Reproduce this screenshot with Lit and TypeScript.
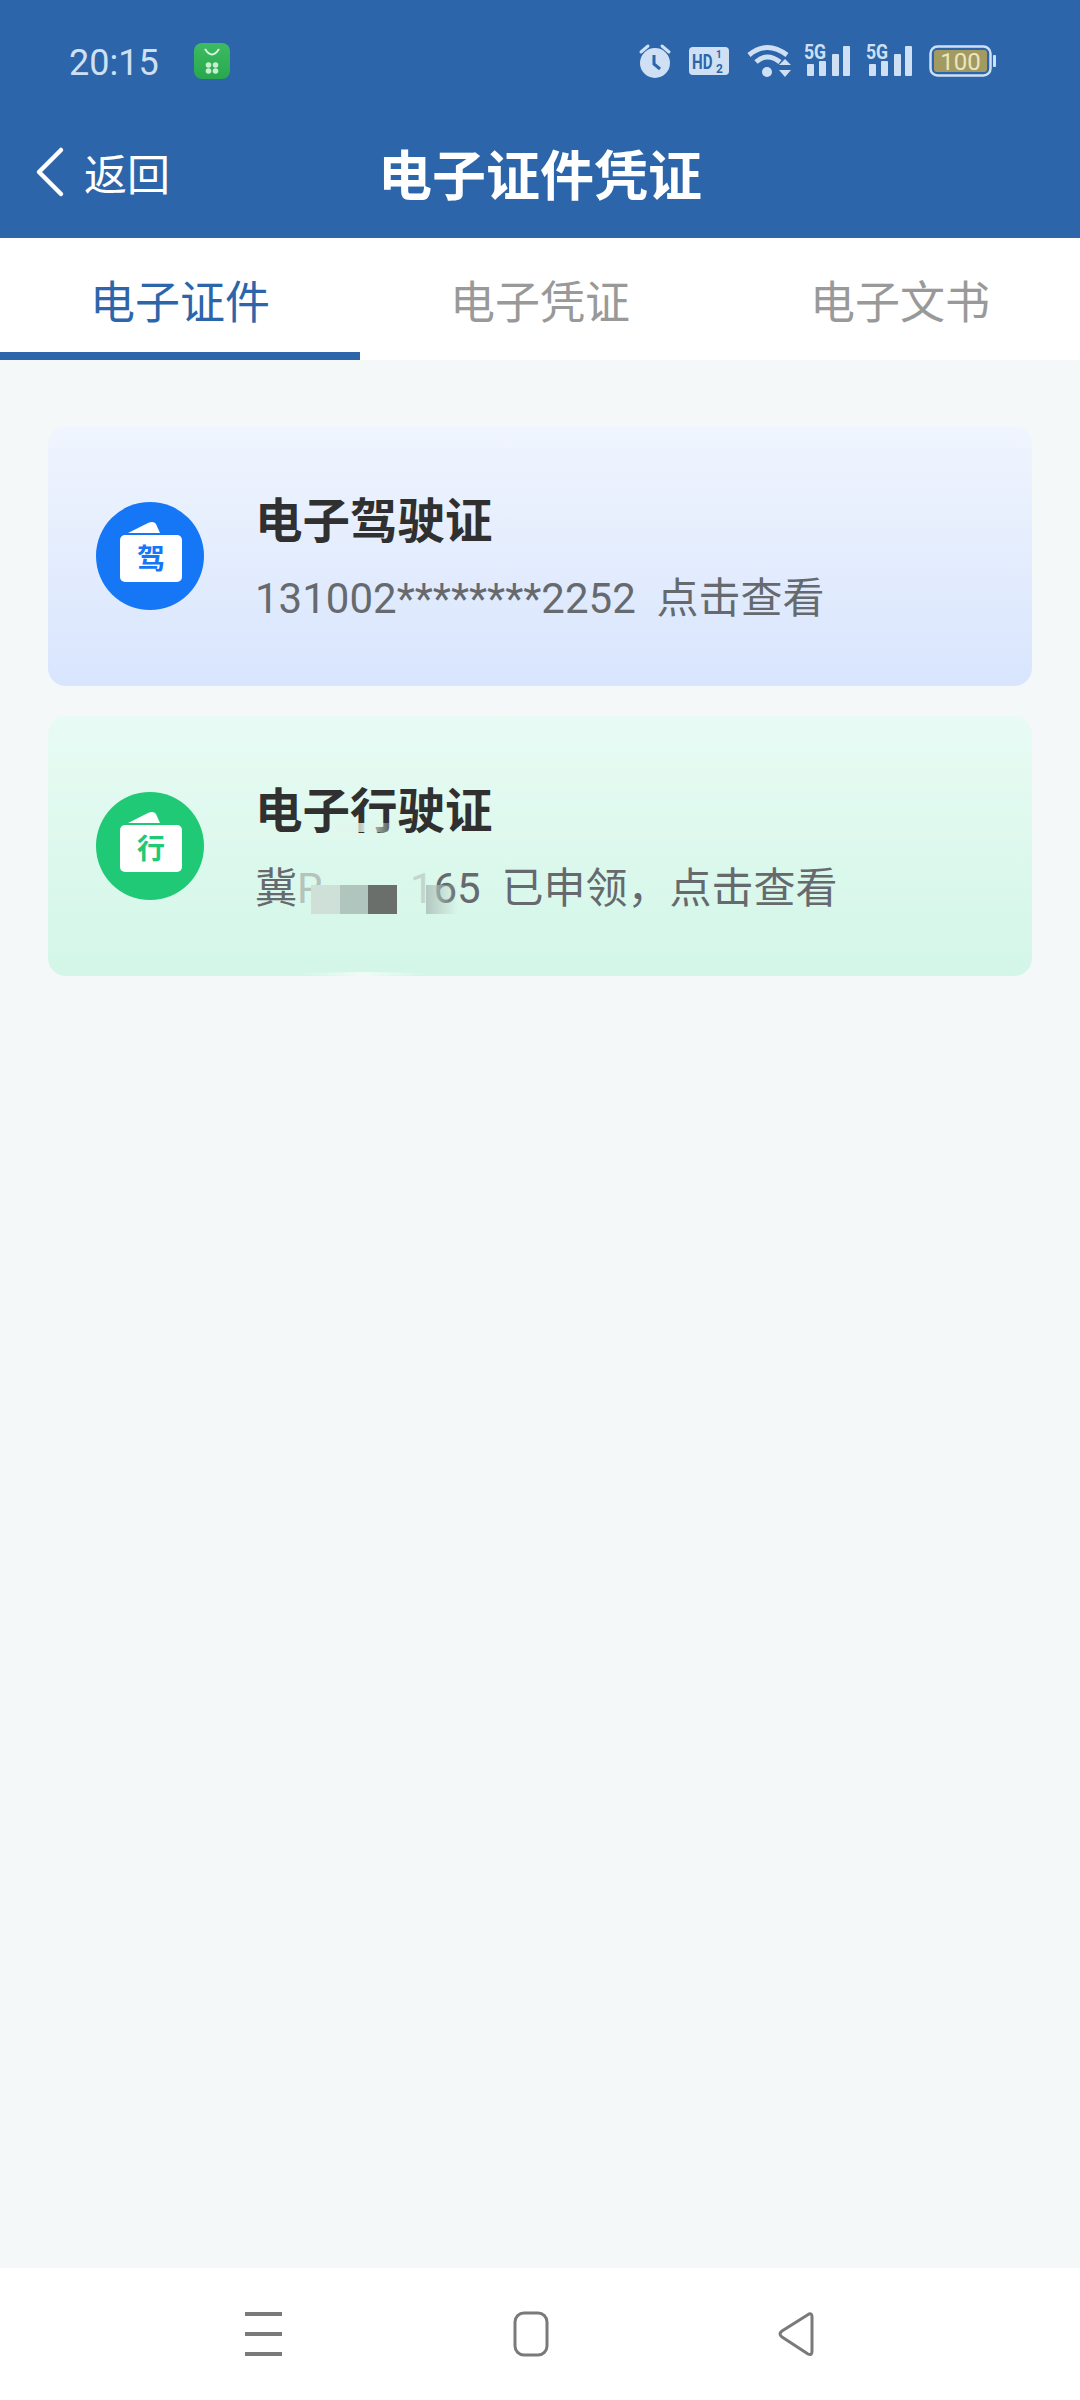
import { LitElement, html, css, svg } from 'lit';
import { customElement, state } from 'lit/decorators.js';

const statusColor = '#cfe0f5';

// card glyph inside the round badge
const badge = (color: string, label: string) => html`
  <svg class="badge" viewBox="0 0 108 108" width="108" height="108">
    <circle cx="54" cy="54" r="54" fill="${color}"></circle>
    <path d="M32 31 L53 20.500 Q58 19 60 22 L64 31 Z" fill="#fff"></path>
    <rect x="24" y="33" width="62" height="47" rx="5" fill="#fff"></rect>
    <text x="55" y="67" text-anchor="middle" font-size="28" font-weight="700" fill="${color}"
      font-family="'Noto Sans CJK SC', sans-serif">${label}</text>
  </svg>
`;

const signal = svg`
  <text transform="translate(0 15) scale(0.84 1)" font-size="21" font-weight="700" fill="${statusColor}" font-family="Roboto, sans-serif">5G</text>
  <rect x="3" y="20" width="7" height="12" rx="1" fill="${statusColor}"></rect>
  <rect x="15" y="17" width="7" height="15" rx="1" fill="${statusColor}"></rect>
  <rect x="28" y="10" width="7" height="22" rx="1" fill="${statusColor}"></rect>
  <rect x="39" y="2" width="7" height="30" rx="1" fill="${statusColor}"></rect>
`;

@customElement('app-root')
export class AppRoot extends LitElement {
  @state() private activeTab = 0;

  static styles = css`
    :host {
      display: flex;
      flex-direction: column;
      width: 1080px;
      height: 2400px;
      background: #f4f8f9;
      font-family: Roboto, 'Noto Sans CJK SC', sans-serif;
    }

    .header {
      background: #2c65a9;
      height: 238px;
      flex: none;
    }

    .status {
      display: flex;
      align-items: center;
      height: 122px;
      padding: 0 83px 0 69px;
      color: #cfe0f5;
    }

    .time {
      font-size: 36px;
      width: 125px;
      margin-top: 3px;
    }

    .status-right {
      margin-left: auto;
      display: flex;
      align-items: center;
      gap: 15px;
    }

    .status-right svg {
      overflow: visible;
    }

    .hd {
      margin-left: 2px;
    }

    .wifi {
      margin-left: 1px;
    }

    .sig-first {
      margin-left: -4px;
    }

    .sig-second {
      margin-left: -1px;
    }

    .nav {
      display: grid;
      grid-template-columns: 1fr auto 1fr;
      align-items: center;
      height: 100px;
      color: #fff;
    }

    .back {
      display: flex;
      align-items: center;
      gap: 18px;
      padding-left: 34px;
      font-size: 43px;
    }

    .title {
      font-size: 54px;
      font-weight: 700;
    }

    .tabs {
      display: grid;
      grid-template-columns: repeat(3, 1fr);
      height: 122px;
      background: #fff;
      flex: none;
    }

    .tab {
      display: flex;
      align-items: center;
      justify-content: center;
      font-size: 45px;
      color: #999;
      padding-top: 8px;
      border-bottom: 8px solid transparent;
      box-sizing: border-box;
    }

    .tab.active {
      color: #2c65a9;
      border-bottom-color: #2c65a9;
    }

    .list {
      flex: 1;
      display: flex;
      flex-direction: column;
      gap: 30px;
      padding: 66px 48px 0;
    }

    .card {
      position: relative;
      display: flex;
      align-items: center;
      gap: 51px;
      height: 260px;
      padding-left: 48px;
      border-radius: 18px;
    }

    .card.blue {
      background: linear-gradient(#f0f5fe, #d8e5fd);
    }

    .card.green {
      background: linear-gradient(#e8fbf4, #d3f6e8);
    }

    .badge {
      flex: none;
      display: block;
    }

    .card-text {
      display: flex;
      flex-direction: column;
      gap: 17px;
      margin-top: 5px;
    }

    .card-title {
      font-size: 47.500px;
      font-weight: 700;
      color: #303030;
      line-height: 64px;
    }

    .card-sub {
      font-size: 42px;
      color: #666a6e;
      line-height: 56px;
      white-space: pre;
    }

    .faded-r {
      color: #b4c4bd;
    }

    .faded-1 {
      color: #c3d6ce;
    }

    .plate {
      display: inline-block;
      width: 87px;
    }

    .mosaic {
      position: absolute;
      top: 169px;
      height: 29px;
    }

    .m1 { left: 263px; width: 29px; background: #cfe0d8; }
    .m2 { left: 292px; width: 28px; background: #b0c5bd; }
    .m3 { left: 320px; width: 29px; background: #6a6f6c; }
    .m4 { left: 378px; width: 32px; background: linear-gradient(90deg, #b3c8c0, rgba(214, 246, 232, 0)); }

    .smear {
      position: absolute;
      left: 282px;
      top: 107px;
      width: 70px;
      height: 9px;
      background: linear-gradient(90deg, rgba(230, 248, 240, 0), rgba(225, 245, 236, 0.9), rgba(230, 248, 240, 0));
    }

    .glow {
      position: absolute;
      left: 250px;
      bottom: 0;
      width: 130px;
      height: 4px;
      border-radius: 50%;
      background: linear-gradient(90deg, rgba(240, 252, 247, 0), #f0fcf7, rgba(240, 252, 247, 0));
    }

    .sysbar {
      flex: none;
      height: 132px;
      background: #fff;
      display: flex;
      align-items: center;
      padding: 0 0 0 245px;
    }

    .sysbar svg {
      display: block;
    }

    .sys-home {
      margin-left: 230px;
    }

    .sys-back {
      margin-left: 229px;
    }
  `;

  private renderStatusIcons() {
    return html`
      <div class="status-right">
        <svg width="34" height="34" viewBox="0 0 34 34">
          <path d="M3 8 L10 2 M31 8 L24 2" stroke="${statusColor}" stroke-width="3" stroke-linecap="round"></path>
          <circle cx="17" cy="19" r="15" fill="${statusColor}"></circle>
          <path d="M16 11 V20 L22 25" stroke="#2c65a9" stroke-width="3" fill="none"></path>
        </svg>
        <svg class="hd" width="42" height="30" viewBox="0 0 42 30">
          <rect width="40" height="28" y="1" rx="4" fill="${statusColor}"></rect>
          <text transform="translate(3 23) scale(0.72 1)" font-size="21" font-weight="700" fill="#2c65a9" font-family="Roboto, sans-serif">HD</text>
          <text x="27" y="12" font-size="10" font-weight="700" fill="#2c65a9" font-family="Roboto, sans-serif">1</text>
          <text x="27" y="27" font-size="12" font-weight="700" fill="#2c65a9" font-family="Roboto, sans-serif">2</text>
        </svg>
        <svg class="wifi" width="46" height="34" viewBox="0 0 46 34">
          <path d="M2 11 Q20 -4 40 11" stroke="${statusColor}" stroke-width="5" fill="none"></path>
          <path d="M9 18 Q20 8 33 18" stroke="${statusColor}" stroke-width="5" fill="none"></path>
          <circle cx="20" cy="28" r="5" fill="${statusColor}"></circle>
          <path d="M32 21 L38 15 L44 21 Z M32 26 H44 L38 33 Z" fill="${statusColor}"></path>
        </svg>
        <svg class="sig-first" width="48" height="34" viewBox="0 0 48 34">${signal}</svg>
        <svg class="sig-second" width="48" height="34" viewBox="0 0 48 34">${signal}</svg>
        <svg width="68" height="32" viewBox="0 0 68 32">
          <rect x="1.500" y="1.500" width="60" height="29" rx="7" fill="none" stroke="${statusColor}" stroke-width="2.500"></rect>
          <rect x="5" y="5" width="53" height="22" rx="3" fill="#a39a62"></rect>
          <rect x="64" y="10" width="3" height="12" rx="1" fill="${statusColor}"></rect>
          <text x="31.500" y="24.500" text-anchor="middle" font-size="24" fill="#ebe6bd" font-family="Roboto, sans-serif">100</text>
        </svg>
      </div>
    `;
  }

  render() {
    const tabs = ['电子证件', '电子凭证', '电子文书'];
    return html`
      <div class="header">
        <div class="status">
          <span class="time">20:15</span>
          <svg width="36" height="36" viewBox="0 0 36 36">
            <defs>
              <linearGradient id="store" x1="0" y1="0" x2="0" y2="1">
                <stop offset="0" stop-color="#3dbb63"></stop>
                <stop offset="1" stop-color="#28a84c"></stop>
              </linearGradient>
            </defs>
            <rect width="36" height="36" rx="8" fill="url(#store)"></rect>
            <path d="M11 6 Q18 17 25 6" stroke="#d9f5df" stroke-width="2" fill="none"></path>
            <circle cx="14.500" cy="22" r="2.800" fill="#c6f0cf"></circle>
            <circle cx="21.500" cy="22" r="2.800" fill="#c6f0cf"></circle>
            <circle cx="14.500" cy="28" r="2.800" fill="#c6f0cf"></circle>
            <circle cx="21.500" cy="28" r="2.800" fill="#c6f0cf"></circle>
          </svg>
          ${this.renderStatusIcons()}
        </div>
        <div class="nav">
          <div class="back">
            <svg width="32" height="52" viewBox="0 0 32 52">
              <path d="M27 4 L5 26 L27 48" stroke="#fff" stroke-width="4.500" fill="none" stroke-linecap="round" stroke-linejoin="round"></path>
            </svg>
            <span>返回</span>
          </div>
          <div class="title">电子证件凭证</div>
          <div></div>
        </div>
      </div>

      <div class="tabs">
        ${tabs.map(
          (t, i) => html`<div class="tab ${i === this.activeTab ? 'active' : ''}">${t}</div>`
        )}
      </div>

      <div class="list">
        <div class="card blue">
          ${badge('#1677f6', '驾')}
          <div class="card-text">
            <div class="card-title">电子驾驶证</div>
            <div class="card-sub">131002********2252  点击查看</div>
          </div>
        </div>
        <div class="card green">
          ${badge('#20c975', '行')}
          <div class="card-text">
            <div class="card-title">电子行驶证</div>
            <div class="card-sub">冀<span class="faded-r">R</span><span class="plate"></span><span class="faded-1">1</span>65  已申领，点击查看</div>
          </div>
          <div class="smear"></div>
          <div class="mosaic m1"></div>
          <div class="mosaic m2"></div>
          <div class="mosaic m3"></div>
          <div class="mosaic m4"></div>
          <div class="glow"></div>
        </div>
      </div>

      <div class="sysbar">
        <svg width="38" height="46" viewBox="0 0 38 46">
          <path d="M0 3 H37 M0 23 H37 M0 43 H37" stroke="#7a7a7a" stroke-width="4"></path>
        </svg>
        <svg class="sys-home" width="36" height="46" viewBox="0 0 36 46">
          <rect x="2" y="2" width="32" height="42" rx="9" fill="none" stroke="#7a7a7a" stroke-width="3"></rect>
        </svg>
        <svg class="sys-back" width="36" height="46" viewBox="0 0 36 46">
          <path d="M31 3 Q34 2 34 6 V40 Q34 45 30 43 L4 26 Q0 23 4 20 Z" fill="none" stroke="#7a7a7a" stroke-width="3" stroke-linejoin="round"></path>
        </svg>
      </div>
    `;
  }
}
